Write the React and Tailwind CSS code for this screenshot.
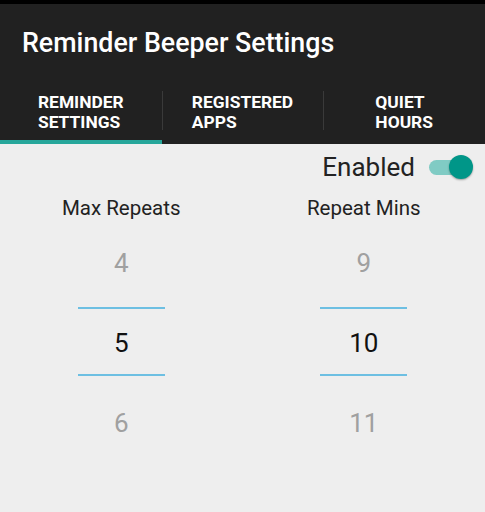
import React, { useState } from 'react';

const tabs = [
  ['REMINDER', 'SETTINGS'],
  ['REGISTERED', 'APPS'],
  ['QUIET', 'HOURS'],
];

function Picker({ label, values }) {
  return (
    <div className="flex flex-col items-center">
      <div className="h-[24px] leading-[24px] text-[20.5px] text-[#222]">{label}</div>
      <div className="mt-[23px] h-[40px] leading-[40px] text-[26px] text-[#a0a0a0]">{values[0]}</div>
      <div className="mt-[24px] h-[2px] w-[87px] bg-[#6dbfe2]" />
      <div className="mt-[14px] h-[40px] leading-[40px] text-[26px] text-[#111]">{values[1]}</div>
      <div className="mt-[11px] h-[2px] w-[87px] bg-[#6dbfe2]" />
      <div className="mt-[27px] h-[40px] leading-[40px] text-[26px] text-[#a0a0a0]">{values[2]}</div>
    </div>
  );
}

export default function App() {
  const [active, setActive] = useState(0);
  const [enabled, setEnabled] = useState(true);

  return (
    <div className="w-[485px] h-[512px] overflow-hidden bg-[#eeeeee]" style={{ fontFamily: 'Roboto, "Noto Sans", sans-serif' }}>
      <div className="h-[4px] bg-black" />
      <div className="bg-[#212121]">
        <div className="h-[81px] flex items-center pl-[22px] pb-[2px]">
          <h1 className="text-white text-[26.8px] font-medium">Reminder Beeper Settings</h1>
        </div>
        <div className="grid grid-cols-3 h-[59px]">
          {tabs.map((t, i) => (
            <button
              key={i}
              onClick={() => setActive(i)}
              className={`relative flex justify-center items-center pb-[6px] ${i > 0 ? 'before:absolute before:left-0 before:top-[6px] before:h-[39px] before:w-px before:bg-[#3a3a3a]' : ''}`}
            >
              <span className="text-left text-white font-bold text-[17.4px] leading-[20px]">
                {t[0]}
                <br />
                {t[1]}
              </span>
              {active === i && <span className="absolute left-0 right-0 bottom-0 h-[4px] bg-[#26a69a]" />}
            </button>
          ))}
        </div>
      </div>

      <div className="flex justify-end items-center h-[44px] pr-[16px] pt-[2px]">
        <span className="text-[26px] text-[#222] mr-[14px]">Enabled</span>
        <button onClick={() => setEnabled(!enabled)} className="relative w-[40px] h-[24px] flex items-center">
          <span className={`w-[40px] h-[15px] rounded-full ${enabled ? 'bg-[#80cbc4]' : 'bg-[#bdbdbd]'}`} />
          <span
            className={`absolute top-0 w-[24px] h-[24px] rounded-full shadow-[0_1px_2px_rgba(0,0,0,0.35)] ${enabled ? 'right-[-4px] bg-[#009688]' : 'left-[-4px] bg-[#fafafa]'}`}
          />
        </button>
      </div>

      <div className="grid grid-cols-2 mt-[8px]">
        <Picker label="Max Repeats" values={['4', '5', '6']} />
        <Picker label="Repeat Mins" values={['9', '10', '11']} />
      </div>
    </div>
  );
}
